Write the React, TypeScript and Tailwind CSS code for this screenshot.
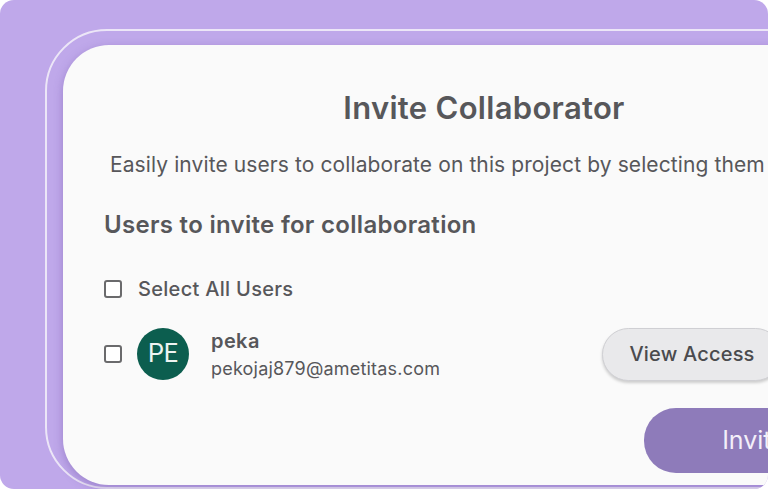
import React from "react";

function Checkbox() {
  return <div className="w-[18px] h-[18px] rounded-[3px] border-2 border-[#6a6a6c] bg-white shrink-0" />;
}

export default function App() {
  const font = { fontFamily: "Inter, 'Open Sans', sans-serif" };
  return (
    <div className="w-[768px] h-[489px] bg-white overflow-hidden" style={font}>
      <div className="w-[768px] h-[489px] rounded-[14px] bg-[#bfa8ea] overflow-hidden pl-[45px] pt-[29px]">
        <div className="w-[880px] h-[460px] rounded-[62px] border-2 border-[#ece6f7] pl-[16px] pt-[14px]">
          <div className="w-[842px] h-[440px] rounded-[46px] bg-[#fafafa] shadow-[0_3px_10px_rgba(90,60,150,0.35)] px-[41px] pt-[45px] flex flex-col text-[#57575a]">
            <h1 className="text-center text-[31px] leading-[36px] font-semibold tracking-[0.3px]">Invite Collaborator</h1>
            <p className="mt-[26px] ml-[6px] text-[21px] leading-[26px] whitespace-nowrap tracking-[0.1px]">
              Easily invite users to collaborate on this project by selecting them
            </p>
            <h2 className="mt-[33px] text-[24px] leading-[28px] font-semibold tracking-[0.3px]">Users to invite for collaboration</h2>
            <div className="mt-[38px] flex items-center gap-[16px]">
              <Checkbox />
              <span className="text-[20px] leading-[24px] font-medium tracking-[0.3px]">Select All Users</span>
            </div>
            <div className="mt-[26px] flex items-center h-[54px]">
              <Checkbox />
              <div
                className="ml-[15px] w-[52px] h-[52px] rounded-full bg-[#0c5e4f] flex items-center justify-center text-[#eef4f2] text-[25px]"
                style={{ fontFamily: "Roboto, sans-serif" }}
              >
                PE
              </div>
              <div className="ml-[22px] flex flex-col">
                <span className="text-[20px] leading-[24px] font-semibold tracking-[0.4px]">peka</span>
                <span className="mt-[5px] text-[18px] leading-[22px] tracking-[0.2px]">pekojaj879@ametitas.com</span>
              </div>
              <button className="ml-auto mr-[82px] w-[180px] h-[53px] rounded-full bg-[#e9e9eb] border border-[#cfcfd3] shadow-[0_2px_3px_rgba(0,0,0,0.18)] text-[20px] font-medium tracking-[0.2px] text-[#4b4b4e]">
                View Access
              </button>
            </div>
            <div className="mt-[27px] flex justify-end">
              <button className="w-[220px] h-[65px] rounded-[32px] bg-[#8e7bba] text-[#f3eff9] text-[25px]">
                Invite
              </button>
            </div>
          </div>
        </div>
      </div>
    </div>
  );
}
